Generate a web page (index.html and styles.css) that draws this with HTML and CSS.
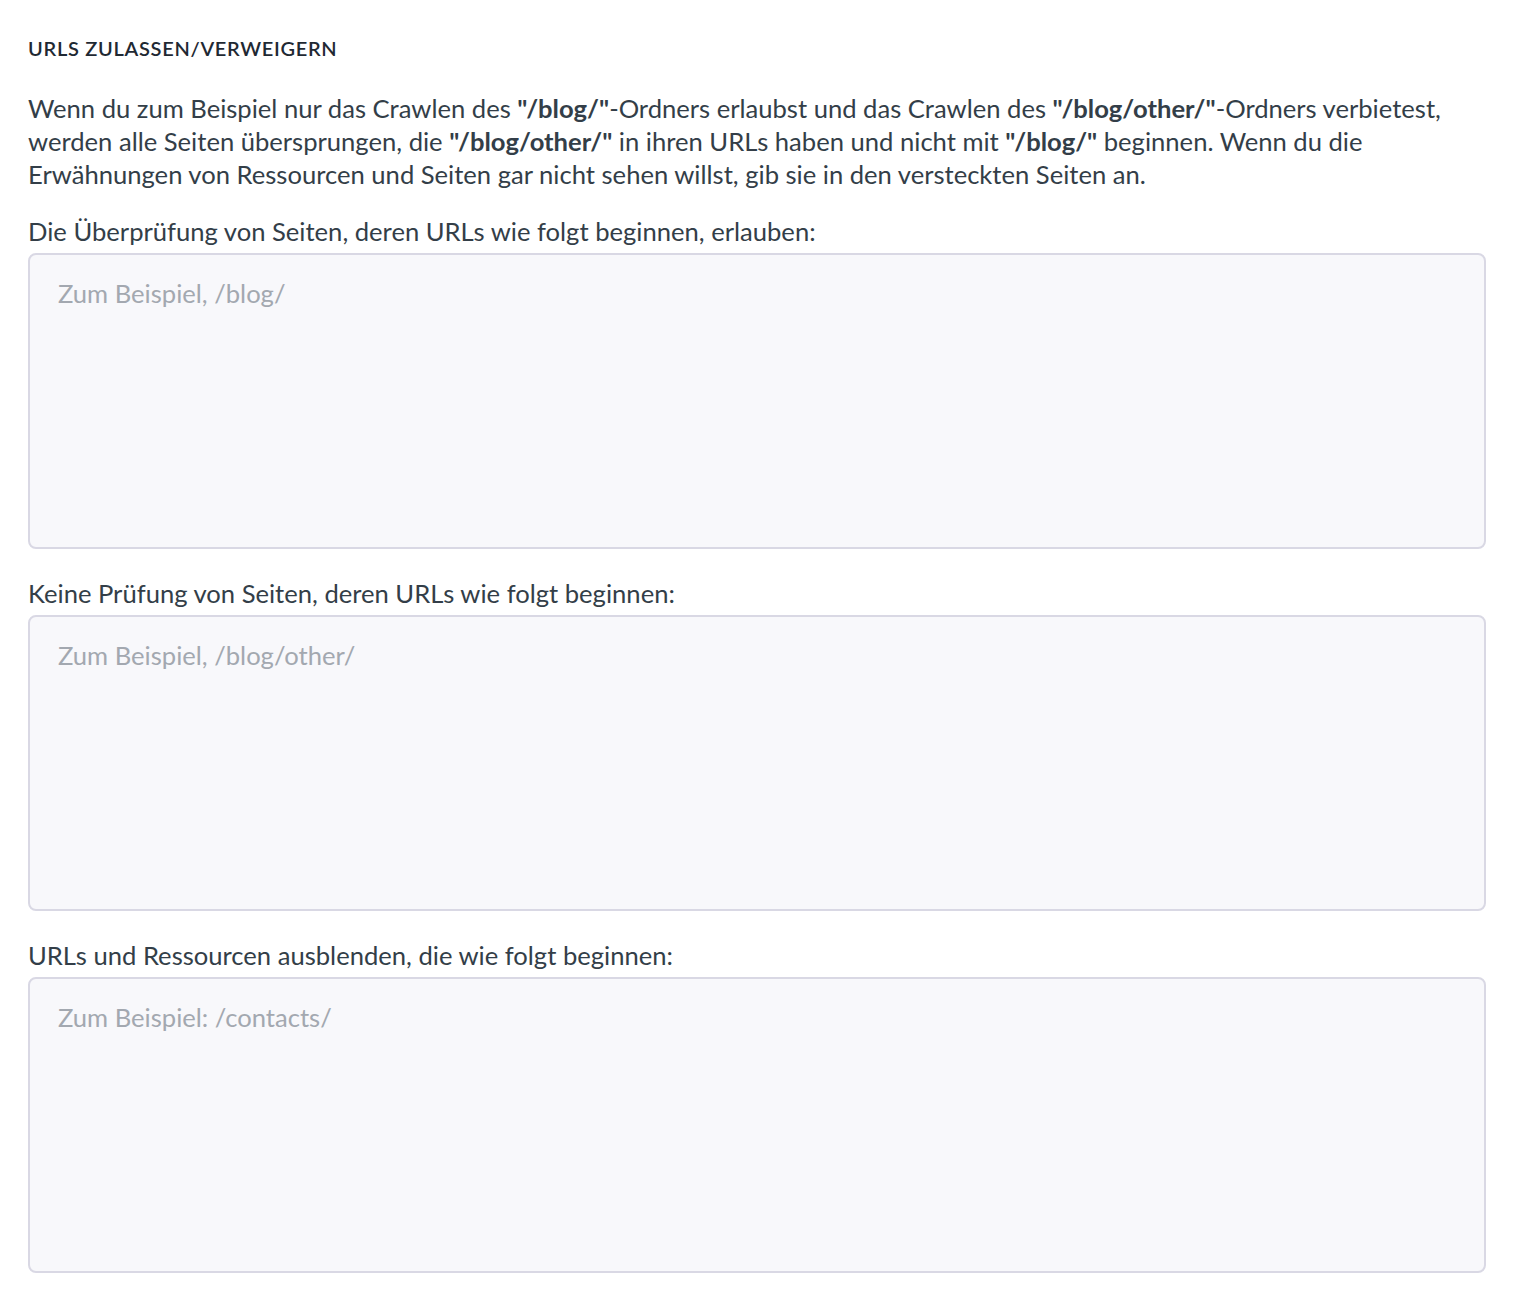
FILE: index.html
```html
<!DOCTYPE html>
<html lang="de">
<head>
<meta charset="utf-8">
<link rel="stylesheet" href="styles.css">
</head>
<body>
<main class="panel">
  <h2 class="title">URLS ZULASSEN/VERWEIGERN</h2>
  <p class="intro">Wenn du zum Beispiel nur das Crawlen des <b>"/blog/"</b>-Ordners erlaubst und das Crawlen des <b>"/blog/other/"</b>-Ordners verbietest, werden alle Seiten übersprungen, die <b>"/blog/other/"</b> in ihren URLs haben und nicht mit <b>"/blog/"</b> beginnen. Wenn du die Erwähnungen von Ressourcen und Seiten gar nicht sehen willst, gib sie in den versteckten Seiten an.</p>
  <div class="field">
    <label class="label" for="allow">Die Überprüfung von Seiten, deren URLs wie folgt beginnen, erlauben:</label>
    <textarea id="allow" class="area" placeholder="Zum Beispiel, /blog/"></textarea>
  </div>
  <div class="field">
    <label class="label" for="deny">Keine Prüfung von Seiten, deren URLs wie folgt beginnen:</label>
    <textarea id="deny" class="area" placeholder="Zum Beispiel, /blog/other/"></textarea>
  </div>
  <div class="field">
    <label class="label" for="hide">URLs und Ressourcen ausblenden, die wie folgt beginnen:</label>
    <textarea id="hide" class="area" placeholder="Zum Beispiel: /contacts/"></textarea>
  </div>
</main>
</body>
</html>
```

FILE: styles.css
```css
html, body {
  margin: 0;
  padding: 0;
  background: #ffffff;
}
body {
  font-family: Lato, "Open Sans", "Liberation Sans", sans-serif;
  color: #333e48;
}
.panel {
  padding: 36px 30px 0 28px;
  display: flex;
  flex-direction: column;
}
.title {
  margin: 0;
  font-size: 20px;
  line-height: 24px;
  font-weight: 600;
  letter-spacing: 0.7px;
  color: #1f2933;
}
.intro {
  margin: 32px 0 0;
  font-size: 25.6px;
  line-height: 33px;
}
.intro b {
  font-weight: 700;
}
.field {
  display: flex;
  flex-direction: column;
  margin-top: 24px;
}
.field + .field {
  margin-top: 28px;
}
.label {
  font-size: 25.6px;
  line-height: 33px;
  margin-bottom: 5px;
}
.area {
  box-sizing: border-box;
  width: 100%;
  height: 296px;
  resize: none;
  border: 2px solid #d9d8e4;
  border-radius: 8px;
  background: #f8f8fb;
  padding: 22px 28px;
  font-family: inherit;
  font-size: 25.6px;
  line-height: 33px;
  color: #333e48;
  outline: none;
}
.area::placeholder {
  color: #a3a8b0;
}
```
